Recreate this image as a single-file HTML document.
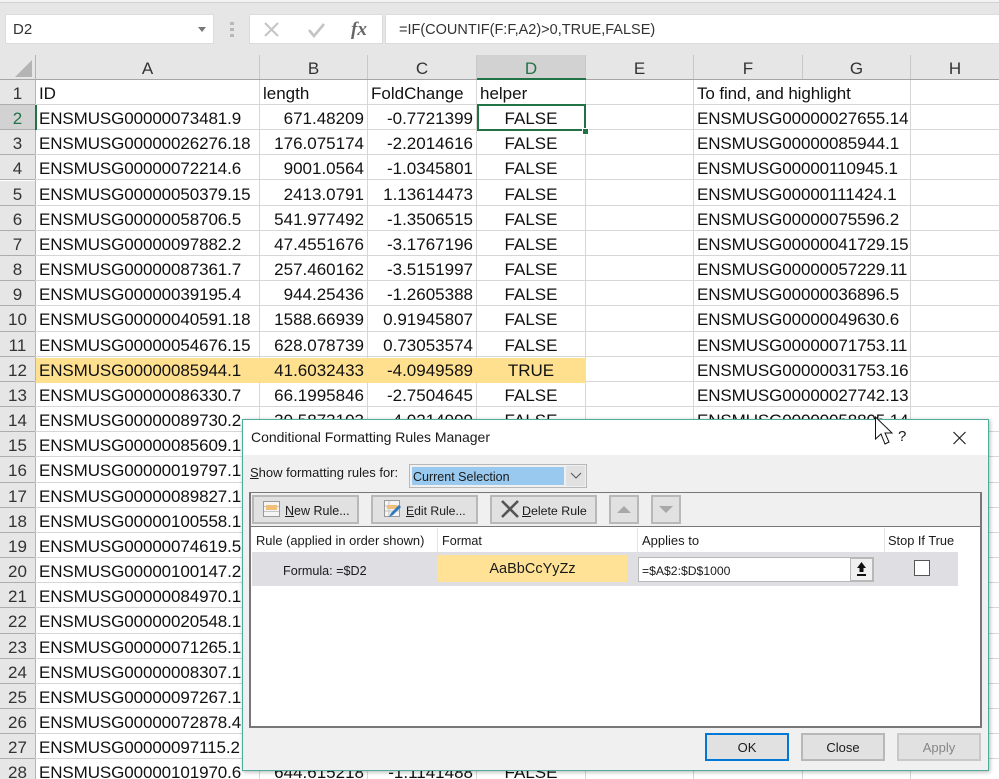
<!DOCTYPE html>
<html><head><meta charset="utf-8"><title>Conditional Formatting Rules Manager</title>
<style>
html,body{margin:0;padding:0;background:#fff}
#p{position:relative;width:999px;height:779px;overflow:hidden;background:#fff;font-family:"Liberation Sans",sans-serif;color:#111}
#p div,#p span,#p svg{position:absolute}
.r{left:0;width:999px;height:25.17px;box-shadow:inset 0 -1px 0 #d6d6d6;font-size:17px;line-height:27.6px;white-space:nowrap}
.n{left:0;width:35px;height:100%;background:#e6e6e6;text-align:center;box-shadow:inset 0 -1px 0 #adadad;color:#333}
.a{left:39px;letter-spacing:-.1px}
.b{right:635px}
.c{right:526px}
.d{left:477px;width:108px;text-align:center}
.f{left:697px;letter-spacing:-.1px}
.v{top:80px;width:1px;height:699px;background:#d6d6d6}
.hd{top:55px;height:24px;background:#e6e6e6;text-align:center;font-size:17px;line-height:27px;border-right:1px solid #c8c8c8;color:#333}
.btn{background:#e1e1e1;box-sizing:border-box;border:2px solid #b8b8b8}
.t{font-size:13px;line-height:16px;white-space:nowrap;color:#1a1a1a}
u{text-decoration:underline}
</style></head><body><div id="p">

<div style="left:0;top:0;width:999px;height:80px;background:#e6e6e6"></div>
<div style="left:0;top:0;width:999px;height:2px;background:#f2f2f2"></div>
<div style="left:0;top:2px;width:999px;height:1px;background:#d2d2d2"></div>

<div style="left:6px;top:15px;width:207px;height:28px;background:#fff;box-shadow:0 0 0 1px #dcdcdc"></div>
<div style="left:13px;top:16px;font-size:15px;line-height:28px;color:#333">D2</div>
<svg style="left:197px;top:27px" width="10" height="6"><path d="M1 0H9L5 5Z" fill="#777"/></svg>
<svg style="left:230px;top:22px" width="5" height="16"><path d="M0 0h4v3H0zM0 6h4v3H0zM0 12h4v3H0z" fill="#b8b8b8"/></svg>
<div style="left:250px;top:15px;width:132px;height:28px;background:#fff;box-shadow:0 0 0 1px #dcdcdc"></div>
<svg style="left:263px;top:21px" width="17" height="17"><path d="M2 2L15 15M15 2L2 15" stroke="#c4c4c4" stroke-width="2" fill="none"/></svg>
<svg style="left:307px;top:21px" width="19" height="17"><path d="M2 9L7 15L17 3" stroke="#c4c4c4" stroke-width="2.6" fill="none"/></svg>
<div style="left:351px;top:16px;font:italic bold 19px/28px 'Liberation Serif',serif;color:#666">fx</div>
<div style="left:386px;top:15px;width:613px;height:28px;background:#fff;box-shadow:0 0 0 1px #dcdcdc"></div>
<div style="left:399px;top:16px;font-size:14.5px;line-height:28px;color:#333;white-space:nowrap">=IF(COUNTIF(F:F,A2)&gt;0,TRUE,FALSE)</div>

<svg style="left:14px;top:59px" width="19" height="19"><path d="M18 1V18H1Z" fill="#b4b4b4"/></svg>
<div class="hd" style="left:36px;width:223px">A</div>
<div class="hd" style="left:260px;width:107px">B</div>
<div class="hd" style="left:368px;width:108px">C</div>
<div class="hd" style="left:477px;width:108px;background:#d2d2d2;color:#217346">D</div>
<div class="hd" style="left:586px;width:107px">E</div>
<div class="hd" style="left:694px;width:108px">F</div>
<div class="hd" style="left:803px;width:107px">G</div>
<div class="hd" style="left:911px;width:88px;border:0">H</div>
<div style="left:0;top:79px;width:999px;height:1px;background:#a6a6a6"></div>
<div style="left:477px;top:78px;width:109px;height:2px;background:#217346"></div>
<div style="left:35px;top:55px;width:1px;height:724px;background:#b4b4b4"></div>

<div class="v" style="left:259px"></div>
<div class="v" style="left:367px"></div>
<div class="v" style="left:476px"></div>
<div class="v" style="left:585px"></div>
<div class="v" style="left:693px"></div>
<div class="v" style="left:910px"></div>
<div style="left:802px;top:760px;width:1px;height:19px;background:#d6d6d6"></div>

<div class="r" style="top:80px"><span class="n">1</span><span class="a">ID</span><span style="left:263px">length</span><span style="left:371px">FoldChange</span><span style="left:480px">helper</span><span class="f">To find, and highlight</span></div>
<div class="r" style="top:105px"><span class="n" style="background:#d2d2d2;color:#217346">2</span><span class="a">ENSMUSG00000073481.9</span><span class="b">671.48209</span><span class="c">-0.7721399</span><span class="d">FALSE</span><span class="f">ENSMUSG00000027655.14</span></div>
<div class="r" style="top:130.17px"><span class="n">3</span><span class="a">ENSMUSG00000026276.18</span><span class="b">176.075174</span><span class="c">-2.2014616</span><span class="d">FALSE</span><span class="f">ENSMUSG00000085944.1</span></div>
<div class="r" style="top:155.34px"><span class="n">4</span><span class="a">ENSMUSG00000072214.6</span><span class="b">9001.0564</span><span class="c">-1.0345801</span><span class="d">FALSE</span><span class="f">ENSMUSG00000110945.1</span></div>
<div class="r" style="top:180.51px"><span class="n">5</span><span class="a">ENSMUSG00000050379.15</span><span class="b">2413.0791</span><span class="c">1.13614473</span><span class="d">FALSE</span><span class="f">ENSMUSG00000111424.1</span></div>
<div class="r" style="top:205.68px"><span class="n">6</span><span class="a">ENSMUSG00000058706.5</span><span class="b">541.977492</span><span class="c">-1.3506515</span><span class="d">FALSE</span><span class="f">ENSMUSG00000075596.2</span></div>
<div class="r" style="top:230.85px"><span class="n">7</span><span class="a">ENSMUSG00000097882.2</span><span class="b">47.4551676</span><span class="c">-3.1767196</span><span class="d">FALSE</span><span class="f">ENSMUSG00000041729.15</span></div>
<div class="r" style="top:256.02px"><span class="n">8</span><span class="a">ENSMUSG00000087361.7</span><span class="b">257.460162</span><span class="c">-3.5151997</span><span class="d">FALSE</span><span class="f">ENSMUSG00000057229.11</span></div>
<div class="r" style="top:281.19px"><span class="n">9</span><span class="a">ENSMUSG00000039195.4</span><span class="b">944.25436</span><span class="c">-1.2605388</span><span class="d">FALSE</span><span class="f">ENSMUSG00000036896.5</span></div>
<div class="r" style="top:306.36px"><span class="n">10</span><span class="a">ENSMUSG00000040591.18</span><span class="b">1588.66939</span><span class="c">0.91945807</span><span class="d">FALSE</span><span class="f">ENSMUSG00000049630.6</span></div>
<div class="r" style="top:331.53px"><span class="n">11</span><span class="a">ENSMUSG00000054676.15</span><span class="b">628.078739</span><span class="c">0.73053574</span><span class="d">FALSE</span><span class="f">ENSMUSG00000071753.11</span></div>
<div class="r" style="top:356.7px"><span style="left:36px;top:1px;width:550px;height:25px;background:#ffe08f"></span><span class="n">12</span><span class="a">ENSMUSG00000085944.1</span><span class="b">41.6032433</span><span class="c">-4.0949589</span><span class="d">TRUE</span><span class="f">ENSMUSG00000031753.16</span></div>
<div class="r" style="top:381.87px"><span class="n">13</span><span class="a">ENSMUSG00000086330.7</span><span class="b">66.1995846</span><span class="c">-2.7504645</span><span class="d">FALSE</span><span class="f">ENSMUSG00000027742.13</span></div>
<div class="r" style="top:407.04px"><span class="n">14</span><span class="a">ENSMUSG00000089730.2</span><span class="b">39.5873103</span><span class="c">-4.0214999</span><span class="d">FALSE</span><span class="f">ENSMUSG00000058805.14</span></div>
<div class="r" style="top:432.21px"><span class="n">15</span><span class="a">ENSMUSG00000085609.1</span></div>
<div class="r" style="top:457.38px"><span class="n">16</span><span class="a">ENSMUSG00000019797.1</span></div>
<div class="r" style="top:482.55px"><span class="n">17</span><span class="a">ENSMUSG00000089827.1</span></div>
<div class="r" style="top:507.72px"><span class="n">18</span><span class="a">ENSMUSG00000100558.1</span></div>
<div class="r" style="top:532.89px"><span class="n">19</span><span class="a">ENSMUSG00000074619.5</span></div>
<div class="r" style="top:558.06px"><span class="n">20</span><span class="a">ENSMUSG00000100147.2</span></div>
<div class="r" style="top:583.23px"><span class="n">21</span><span class="a">ENSMUSG00000084970.1</span></div>
<div class="r" style="top:608.4px"><span class="n">22</span><span class="a">ENSMUSG00000020548.1</span></div>
<div class="r" style="top:633.57px"><span class="n">23</span><span class="a">ENSMUSG00000071265.1</span></div>
<div class="r" style="top:658.74px"><span class="n">24</span><span class="a">ENSMUSG00000008307.1</span></div>
<div class="r" style="top:683.91px"><span class="n">25</span><span class="a">ENSMUSG00000097267.1</span></div>
<div class="r" style="top:709.08px"><span class="n">26</span><span class="a">ENSMUSG00000072878.4</span></div>
<div class="r" style="top:734.25px"><span class="n">27</span><span class="a">ENSMUSG00000097115.2</span></div>
<div class="r" style="top:759.42px"><span class="n">28</span><span class="a">ENSMUSG00000101970.6</span><span class="b">644.615218</span><span class="c">-1.1141488</span><span class="d">FALSE</span></div>

<div style="left:35px;top:105px;width:2px;height:25px;background:#217346"></div>
<div style="left:477px;top:104px;width:109px;height:27px;box-sizing:border-box;border:2px solid #217346"></div>
<div style="left:582px;top:128px;width:5px;height:5px;background:#217346;border:1px solid #fff"></div>

<!-- Dialog -->
<div style="left:242px;top:419px;width:747px;height:352px;box-sizing:border-box;border:1px solid #4fab9b;background:#f0f0f0;box-shadow:1px 1px 4px rgba(0,0,0,.3)"></div>
<div style="left:243px;top:420px;width:745px;height:35px;background:#fff"></div>
<div class="t" style="left:251px;top:429px;font-size:14px;letter-spacing:-.02px">Conditional Formatting Rules Manager</div>
<div class="t" style="left:898px;top:429px;font-size:15px">?</div>
<svg style="left:952px;top:431px" width="15" height="14"><path d="M1.5 1L13.5 13M13.5 1L1.5 13" stroke="#222" stroke-width="1.2" fill="none"/></svg>

<div class="t" style="left:250px;top:465px"><u>S</u>how formatting rules for:</div>
<div style="left:409px;top:464px;width:178px;height:24px;box-sizing:border-box;border:1px solid #b8b8b8;background:#f0f0f0"></div>
<div style="left:412px;top:467px;width:152px;height:18px;background:#99c9ef"></div>
<div class="t" style="left:413px;top:469px;font-size:12.5px">Current Selection</div>
<div style="left:566px;top:466px;width:19px;height:20px;background:#e1e1e1"></div>
<svg style="left:570px;top:472px" width="12" height="8"><path d="M1 1L6 6L11 1" stroke="#555" fill="none"/></svg>

<div style="left:249px;top:492px;width:733px;height:236px;box-sizing:border-box;border:2px solid #77777a;border-top-width:1px;background:#fff"></div>
<div style="left:251px;top:493px;width:729px;height:33px;background:#f0f0f0"></div>
<div style="left:251px;top:526px;width:729px;height:1px;background:#77777a"></div>

<div class="btn" style="left:252px;top:495px;width:107px;height:29px"></div>
<svg style="left:263px;top:501px" width="18" height="17"><rect x=".5" y=".5" width="16" height="15" fill="#f5f5f5" stroke="#999"/><path d="M1 5.5H16M1 10.5H16" stroke="#c4c4c4"/><rect x="3" y="4" width="11" height="5" fill="#f0c07a"/></svg>
<div class="t" style="left:285px;top:503px;font-size:12.5px"><u>N</u>ew Rule...</div>

<div class="btn" style="left:371px;top:495px;width:107px;height:29px"></div>
<svg style="left:384px;top:500px" width="19" height="19"><rect x=".5" y=".5" width="15" height="16" fill="#f5f5f5" stroke="#999"/><path d="M1 6H15M1 11H15M5 1V16" stroke="#c4c4c4"/><rect x="3" y="5" width="10" height="4" fill="#f0c07a"/><path d="M5 17L7 13L15 5L17 7L9 15Z" fill="#2f79bd"/></svg>
<div class="t" style="left:406px;top:503px;font-size:12.2px"><u>E</u>dit Rule...</div>

<div class="btn" style="left:490px;top:495px;width:107px;height:29px"></div>
<svg style="left:500px;top:499px" width="20" height="20"><path d="M2 2L18 18M18 2L2 18" stroke="#555" stroke-width="2.6" fill="none"/></svg>
<div class="t" style="left:522px;top:503px;font-size:12.4px"><u>D</u>elete Rule</div>

<div class="btn" style="left:609px;top:495px;width:30px;height:29px"></div>
<svg style="left:617px;top:506px" width="14" height="8"><path d="M0 7L7 0L14 7Z" fill="#a8a8a8"/></svg>
<div class="btn" style="left:651px;top:495px;width:30px;height:29px"></div>
<svg style="left:659px;top:506px" width="14" height="8"><path d="M0 0H14L7 7Z" fill="#a8a8a8"/></svg>

<div class="t" style="left:256px;top:533px;font-size:12.9px">Rule (applied in order shown)</div>
<div class="t" style="left:442px;top:533px;font-size:12.6px">Format</div>
<div class="t" style="left:642px;top:533px">Applies to</div>
<div class="t" style="left:888px;top:533px;font-size:12.8px">Stop If True</div>
<div style="left:437px;top:528px;width:1px;height:24px;background:#e4e4e4"></div>
<div style="left:637px;top:528px;width:1px;height:24px;background:#e4e4e4"></div>
<div style="left:884px;top:528px;width:1px;height:24px;background:#e4e4e4"></div>

<div style="left:252px;top:552px;width:706px;height:34px;background:#dfdfe3"></div>
<div class="t" style="left:283px;top:563px;font-size:12.6px">Formula: =$D2</div>
<div style="left:438px;top:555px;width:189px;height:27px;background:#ffe296;text-align:center;font-size:14.5px;line-height:29px;color:#1a1a1a">AaBbCcYyZz</div>
<div style="left:638px;top:557px;width:236px;height:25px;box-sizing:border-box;border:1px solid #b8b8b8;background:#fff"></div>
<div style="left:850px;top:557px;width:24px;height:25px;box-sizing:border-box;border:2px solid #b8b8b8;border-left-width:1px;background:#f0f0f0"></div>
<svg style="left:855px;top:561px" width="13" height="16"><path d="M6.5 1L11 7H8.5V11H4.5V7H2Z" fill="#111"/><path d="M2 13H11V15H2Z" fill="#111"/></svg>
<div class="t" style="left:642px;top:563px;font-size:12.2px">=$A$2:$D$1000</div>
<div style="left:914px;top:560px;width:16px;height:16px;box-sizing:border-box;border:1px solid #555;background:#fff"></div>

<div class="btn" style="left:705px;top:733px;width:84px;height:28px;border-color:#0078d7"></div>
<div class="t" style="left:705px;top:740px;width:84px;text-align:center">OK</div>
<div class="btn" style="left:801px;top:733px;width:84px;height:28px"></div>
<div class="t" style="left:801px;top:740px;width:84px;text-align:center">Close</div>
<div class="btn" style="left:897px;top:733px;width:84px;height:28px;border-color:#c8c8c8"></div>
<div class="t" style="left:897px;top:740px;width:84px;text-align:center;color:#868686">Apply</div>

<svg style="left:874px;top:415px" width="20" height="32"><path d="M1.5 2V24L7 19L11 29L15 27L11 18H18Z" fill="#fff" stroke="#111" stroke-width="1"/></svg>
</div></body></html>
